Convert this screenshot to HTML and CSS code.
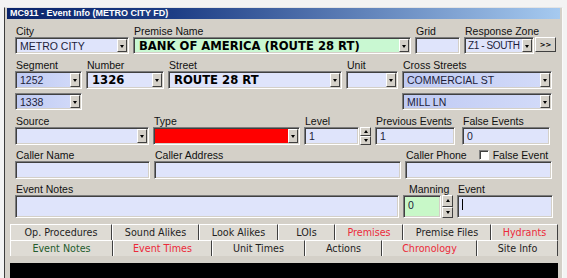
FILE: index.html
```html
<!DOCTYPE html>
<html lang="en">
<head>
    <meta charset="UTF-8">
    <meta name="viewport" content="width=device-width, initial-scale=1.0">
    <title>MC911 - Event Info</title>
    <link rel="stylesheet" href="styles.css">
</head>
<body>
<div class="window">
    <div class="titlebar">MC911 - Event Info (METRO CITY FD)</div>

    <div class="form">
        <!-- city / premise / grid / zone -->
        <div class="row row1">
            <div class="cell">
                <label>City</label>
                <div class="box combo"><span class="val">METRO CITY</span><span class="drop"></span></div>
            </div>
            <div class="cell">
                <label>Premise Name</label>
                <div class="box combo green"><span class="val big">BANK OF AMERICA (ROUTE 28 RT)</span><span class="drop"></span></div>
            </div>
            <div class="cell">
                <label>Grid</label>
                <div class="box"></div>
            </div>
            <div class="cell">
                <label>Response Zone</label>
                <div class="inline">
                    <div class="box combo zone"><span class="val">Z1 - SOUTH</span><span class="drop"></span></div>
                    <button class="more">&gt;&gt;</button>
                </div>
            </div>
        </div>

        <!-- address -->
        <div class="row row2">
            <div class="cell">
                <label>Segment</label>
                <div class="box combo blue"><span class="val">1252</span><span class="drop"></span></div>
            </div>
            <div class="cell">
                <label>Number</label>
                <div class="box combo"><span class="val big">1326</span><span class="drop"></span></div>
            </div>
            <div class="cell">
                <label>Street</label>
                <div class="box combo"><span class="val big">ROUTE 28 RT</span><span class="drop"></span></div>
            </div>
            <div class="cell">
                <label>Unit</label>
                <div class="box combo"><span class="val"></span><span class="drop"></span></div>
            </div>
            <div class="cell">
                <label>Cross Streets</label>
                <div class="box combo blue"><span class="val">COMMERCIAL ST</span><span class="drop"></span></div>
            </div>
        </div>

        <div class="row row2 row3">
            <div class="box combo blue"><span class="val">1338</span><span class="drop"></span></div>
            <div class="box combo blue cross2"><span class="val">MILL LN</span><span class="drop"></span></div>
        </div>

        <!-- source / type / counters -->
        <div class="row row4">
            <div class="cell">
                <label>Source</label>
                <div class="box combo"><span class="val"></span><span class="drop"></span></div>
            </div>
            <div class="cell">
                <label>Type</label>
                <div class="box combo red"><span class="val"></span><span class="drop"></span></div>
            </div>
            <div class="cell">
                <label>Level</label>
                <div class="inline">
                    <div class="box field"><span class="val">1</span></div>
                    <div class="spin"><span class="up"></span><span class="down"></span></div>
                </div>
            </div>
            <div class="cell">
                <label>Previous Events</label>
                <div class="box field"><span class="val">1</span></div>
            </div>
            <div class="cell shift">
                <label>False Events</label>
                <div class="box field"><span class="val">0</span></div>
            </div>
        </div>

        <!-- caller -->
        <div class="row row5">
            <div class="cell">
                <label>Caller Name</label>
                <div class="box"></div>
            </div>
            <div class="cell">
                <label>Caller Address</label>
                <div class="box"></div>
            </div>
            <div class="cell">
                <div class="label-line">
                    <label>Caller Phone</label>
                    <span class="check"></span>
                    <label>False Event</label>
                </div>
                <div class="box"></div>
            </div>
        </div>

        <!-- notes -->
        <div class="row row6">
            <div class="cell">
                <label>Event Notes</label>
                <div class="box tall"></div>
            </div>
            <div class="cell">
                <label class="centered">Manning</label>
                <div class="inline">
                    <div class="box tall field-top green-light"><span class="val">0</span></div>
                    <div class="spin"><span class="up"></span><span class="down"></span></div>
                </div>
            </div>
            <div class="cell">
                <label>Event</label>
                <div class="box tall"><span class="caret"></span></div>
            </div>
        </div>
    </div>

    <div class="tabs">
        <div class="tabrow row-a">
            <div class="tab">Op. Procedures</div>
            <div class="tab">Sound Alikes</div>
            <div class="tab">Look Alikes</div>
            <div class="tab">LOIs</div>
            <div class="tab hot">Premises</div>
            <div class="tab">Premise Files</div>
            <div class="tab hot">Hydrants</div>
        </div>
        <div class="tabrow row-b">
            <div class="tab notes">Event Notes</div>
            <div class="tab hot">Event Times</div>
            <div class="tab">Unit Times</div>
            <div class="tab">Actions</div>
            <div class="tab hot">Chronology</div>
            <div class="tab">Site Info</div>
        </div>
    </div>

    <div class="console"></div>
</div>
</body>
</html>
```

FILE: styles.css
```css
body {
    margin: 0;
    background: #f3f3f3;
    font-family: "Liberation Sans", Arial, sans-serif;
    font-size: 10.5px;
    color: #111;
    overflow: hidden;
}
.window {
    margin: 7px 0 0 4px;
    width: 553px;
    height: 270px;
    padding: 0 2px;
    background: #d4d0c8;
    border-left: 1px solid #3c3c3c;
    border-right: 1px solid #fafafa;
    border-top: 1px solid #e4e4e4;
    overflow: hidden;
}
.titlebar {
    height: 11px;
    line-height: 11px;
    padding-left: 3px;
    background: linear-gradient(to right, #0a246a 0%, #1d3d85 30%, #a6caf0 100%);
    color: #fff;
    font-weight: bold;
    font-size: 9px;
    white-space: nowrap;
}
.form {
    padding: 6px 0 0 8px;
}
.row {
    display: grid;
    column-gap: 4px;
    align-items: end;
}
.row1 { grid-template-columns: 114px 278px 45px 92px; }
.row2 { grid-template-columns: 67px 78px 174px 52px 150px; margin-top: 5px; }
.row2 .box { height: 18px; }
.row3 { margin-top: 4px; }
.row3 .box { height: 17px; }
.row3 .cross2 { grid-column: 5; }
.row4 { grid-template-columns: 134px 147px 67px 80px 91px; margin-top: 5px; }
.row4 .box { height: 18px; }
.row5 { grid-template-columns: 135px 247px 147px; margin-top: 4px; }
.row5 .box { height: 18px; }
.row6 { grid-template-columns: 384px 50px 96px; margin-top: 4px; }

.cell label {
    display: block;
    height: 12px;
    line-height: 12px;
    padding-left: 1px;
    white-space: nowrap;
}
.cell label.centered {
    padding-left: 6px;
}
.shift {
    padding-left: 3px;
}
.label-line {
    display: flex;
    align-items: center;
    height: 12px;
}
.label-line label {
    display: inline;
}
.check {
    box-sizing: border-box;
    width: 10px;
    height: 10px;
    margin: 0 3px 0 12px;
    background: #fff;
    border: 1px solid;
    border-color: #808080 #fff #fff #808080;
    box-shadow: inset 1px 1px 0 #404040;
}

.box {
    box-sizing: border-box;
    height: 17px;
    background: #dfe4fb;
    border: 1px solid;
    border-color: #7c7c7c #fff #fff #7c7c7c;
    box-shadow: inset 1px 1px 0 #404040, inset -1px -1px 0 #d4d0c8;
    overflow: hidden;
}
.box.tall {
    height: 23px;
}
.combo, .field {
    display: flex;
    align-items: center;
    padding: 1px;
}
.field-top {
    display: flex;
    align-items: flex-start;
    padding: 3px 1px 1px;
}
.val {
    flex: 1;
    padding-left: 3px;
    white-space: nowrap;
    overflow: hidden;
    color: #1c1c3a;
}
.val.big {
    font-family: "DejaVu Sans", Verdana, sans-serif;
    font-weight: bold;
    font-size: 11.6px;
    color: #000;
    padding-left: 4px;
}
.green {
    background: #c9f8d2;
}
.green-light {
    background: #c8f8c8;
}
.blue {
    background: linear-gradient(to right, #bfcaf3, #d3dbf9);
}
.red {
    background: #ff0000;
}
.drop {
    align-self: stretch;
    flex: none;
    width: 10px;
    box-sizing: border-box;
    background: #d4d0c8;
    border: 1px solid;
    border-color: #fff #404040 #404040 #fff;
    display: flex;
    align-items: center;
    justify-content: center;
}
.drop::after {
    content: "";
    border-left: 2px solid transparent;
    border-right: 2px solid transparent;
    border-top: 3px solid #000;
    margin-top: 1px;
}

.inline {
    display: flex;
    align-items: flex-start;
    gap: 1px;
}
.inline .box {
    flex: 1;
}
.zone {
    flex: none;
    width: 70px;
}
.zone .val {
    padding-left: 2px;
    font-size: 10px;
    letter-spacing: -0.4px;
}
.more {
    box-sizing: border-box;
    width: 21px;
    height: 15px;
    padding: 0;
    background: #d4d0c8;
    border: 1px solid;
    border-color: #fff #404040 #404040 #fff;
    font-family: "DejaVu Sans", sans-serif;
    font-weight: bold;
    font-size: 7px;
    color: #000;
}
.spin {
    flex: none;
    width: 11px;
    align-self: stretch;
    display: flex;
    flex-direction: column;
}
.spin span {
    flex: 1;
    box-sizing: border-box;
    background: #d4d0c8;
    border: 1px solid;
    border-color: #fff #404040 #404040 #fff;
    display: flex;
    align-items: center;
    justify-content: center;
}
.spin .up::after {
    content: "";
    border-left: 2px solid transparent;
    border-right: 2px solid transparent;
    border-bottom: 3px solid #000;
}
.spin .down::after {
    content: "";
    border-left: 2px solid transparent;
    border-right: 2px solid transparent;
    border-top: 3px solid #000;
}
.caret {
    display: block;
    width: 1px;
    height: 11px;
    margin: 3px 0 0 4px;
    background: #000;
}

.tabs {
    margin: 6px 2px 0 3px;
}
.tabrow {
    display: grid;
    height: 16px;
}
.row-a { grid-template-columns: 102px 87px 79px 57px 68px 88px 67px; }
.row-b { grid-template-columns: 103px 99px 93px 77px 95px 81px; }
.tab {
    box-sizing: border-box;
    display: flex;
    align-items: center;
    justify-content: center;
    background: #dedbd4;
    border-top: 1px solid #fff;
    border-left: 1px solid #fff;
    border-right: 1px solid #404040;
    font-family: "DejaVu Sans", Verdana, sans-serif;
    font-size: 9.6px;
    color: #1e1e1e;
    white-space: nowrap;
}
.tab.hot {
    color: #ec2a3a;
}
.tab.notes {
    color: #245c2c;
}
.console {
    margin: 7px 2px 0 3px;
    height: 20px;
    background: #000;
}
```
